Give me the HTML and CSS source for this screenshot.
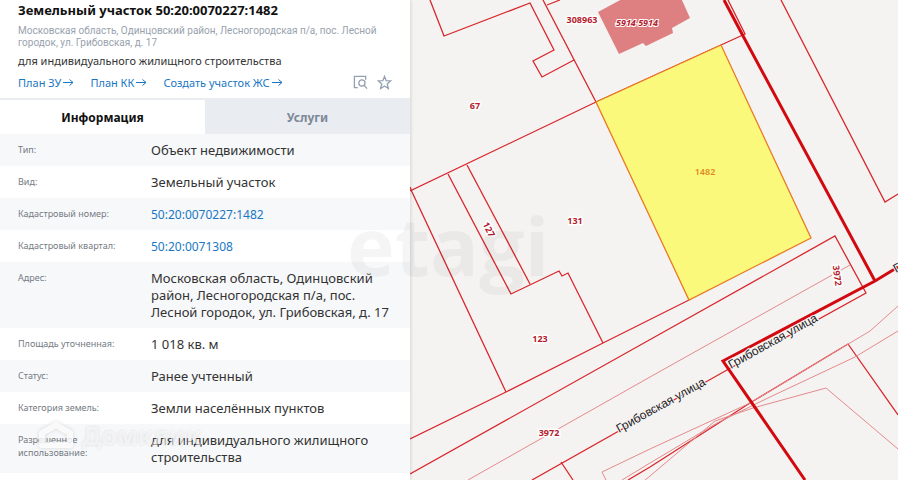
FILE: index.html
```html
<!DOCTYPE html>
<html lang="ru">
<head>
  <meta charset="UTF-8">
  <meta name="viewport" content="width=device-width, initial-scale=1">
  <title>Земельный участок 50:20:0070227:1482</title>
  <link rel="stylesheet" href="styles.css">
</head>
<body>

  <div class="page">
    <aside class="panel">
      <header class="panel-head">
        <h1>Земельный участок 50:20:0070227:1482</h1>
        <p class="address">Московская область, Одинцовский район, Лесногородская п/а, пос. Лесной городок, ул. Грибовская, д. 17</p>
        <p class="purpose">для индивидуального жилищного строительства</p>
        <div class="actions">
          <a href="#">План ЗУ<svg class="arrow" viewBox="0 0 11 9"><path d="M0 4.500h10M6.500 1.500l3.500 3-3.500 3"/></svg></a>
          <a href="#">План КК<svg class="arrow" viewBox="0 0 11 9"><path d="M0 4.500h10M6.500 1.500l3.500 3-3.500 3"/></svg></a>
          <a href="#">Создать участок ЖС<svg class="arrow" viewBox="0 0 11 9"><path d="M0 4.500h10M6.500 1.500l3.500 3-3.500 3"/></svg></a>
          <div class="tools">
            <button type="button" aria-label="Показать на карте">
              <svg viewBox="0 0 16 16"><path d="M5 13.500H1.500V1.500H13.500V5"/><circle cx="9.500" cy="8.500" r="3.300"/><path d="M12 11l3 3.500"/></svg>
            </button>
            <button type="button" aria-label="В избранное">
              <svg viewBox="0 0 16 16"><path d="M8 1.500l1.800 4.500 4.700.3-3.600 3.200 1.200 4.900L8 11.800 3.900 14.400l1.200-4.900-3.600-3.200 4.700-.3z"/></svg>
            </button>
          </div>
        </div>
      </header>

      <div class="tabs">
        <button type="button" class="tab active">Информация</button>
        <button type="button" class="tab">Услуги</button>
      </div>

      <table class="info">
        <tr><th scope="row">Тип:</th><td>Объект недвижимости</td></tr>
        <tr><th scope="row">Вид:</th><td>Земельный участок</td></tr>
        <tr><th scope="row">Кадастровый номер:</th><td><a href="#">50:20:0070227:1482</a></td></tr>
        <tr><th scope="row">Кадастровый квартал:</th><td><a href="#">50:20:0071308</a></td></tr>
        <tr><th scope="row">Адрес:</th><td>Московская область, Одинцовский район, Лесногородская п/а, пос. Лесной городок, ул. Грибовская, д. 17</td></tr>
        <tr><th scope="row">Площадь уточненная:</th><td>1 018 кв. м</td></tr>
        <tr><th scope="row">Статус:</th><td>Ранее учтенный</td></tr>
        <tr><th scope="row">Категория земель:</th><td>Земли населённых пунктов</td></tr>
        <tr><th scope="row">Разрешенное использование:</th><td>для индивидуального жилищного строительства</td></tr>
      </table>

      <div class="mark-domclick">
        <svg viewBox="0 0 36 28"><path d="M4 12L18 4l14 8v12H4z"/></svg>
        <span>Домклик</span>
      </div>
    </aside>

    <main class="map">
      <svg viewBox="410 0 488 480" preserveAspectRatio="xMinYMin slice">
        <!-- здание -->
        <path class="building" d="M598 12L624-2H681L690 18 672 28 673 33 646 46 643 43 619 54z"/>

        <!-- соседние участки -->
        <g class="line">
          <path d="M430 0L444 36 530 3 554 50 533 61 542 77 574 60"/>
          <path d="M543 0L596 102M547 5L560 0"/>
          <path d="M410 191L596 102 721 45 745 34 728 0"/>
          <path d="M410 187L412 192 506 392"/>
          <path d="M448 174L511 294 559 271 562 276 568 273 603 343"/>
          <path d="M467 165L530 284"/>
          <path d="M410 439L506 392 603 343 689 300"/>
          <path d="M410 474L660 334 835 236 866 293 727 370 532 480"/>
          <path d="M561 462L573 480"/>
          <path d="M781 0L885 202 898 194"/>
          <path d="M628 480L650 467 750 403 848 344 898 415"/>
        </g>
        <g class="line pale">
          <path d="M850 265L650 377 468 480"/>
          <path d="M898 306L870 331 750 403 650 449 602 472 606 480"/>
          <path d="M898 331L855 357 770 397 717 423 650 463 622 480"/>
          <path d="M898 449L826 388 753 408 715 421 650 476 645 480"/>
        </g>
        <path class="line thick" d="M724 0L742 34 875 281"/>
        <path class="line thick" d="M898 267L875 281 723 361 805 480"/>

        <!-- выбранный участок -->
        <path class="selected" d="M596 102L721 45 811 238 689 300z"/>

        <g class="label">
          <text x="475" y="109">67</text>
          <text x="582" y="23">308963</text>
          <text x="575" y="224">131</text>
          <text x="540" y="342">123</text>
          <text x="549" y="436">3972</text>
          <text transform="translate(486 231) rotate(63)">127</text>
          <text transform="translate(834 276) rotate(83)">3972</text>
          <text class="house" x="637" y="26">5914 5914</text>
        </g>
        <text class="selected-label" x="705" y="175">1482</text>

        <g class="street">
          <text transform="translate(619 433) rotate(-29)">Грибовская улица</text>
          <text transform="translate(731 369) rotate(-29)">Грибовская улица</text>
          <text transform="translate(896 273) rotate(-29)">Г</text>
        </g>
      </svg>
    </main>

    <div class="mark-etagi">etagi</div>
  </div>

</body>
</html>
```
FILE: styles.css
```css
* {
  box-sizing: border-box;
}

body {
  margin: 0;
  font-family: "Noto Sans", "Open Sans", sans-serif;
  font-size: 13px;
  line-height: 17px;
  color: #333;
  background: #f4f3f2;
}

a {
  color: #1a77c4;
  text-decoration: none;
}

button {
  font: inherit;
  border: none;
  padding: 0;
  background: none;
  cursor: pointer;
}

.page {
  position: relative;
  display: flex;
  height: 100vh;
  overflow: hidden;
}

/* левая панель */
.panel {
  position: relative;
  z-index: 1;
  flex: 0 0 410px;
  background: #fff;
  box-shadow: 0 0 4px rgba(0, 0, 0, 0.2);
}

.panel-head {
  padding: 2px 18px 7px;
  border-bottom: 2px solid #e9ecf1;
}

.panel-head h1 {
  margin: 0 0 6px;
  font-size: 13px;
  line-height: 17px;
  color: #111;
}

.address {
  margin: 0 0 3px;
  max-width: 360px;
  font-family: Roboto, sans-serif;
  font-size: 10px;
  line-height: 12px;
  color: #98a2ae;
}

.purpose {
  margin: 0 0 5px;
  font-size: 11px;
}

.actions {
  display: flex;
  align-items: center;
  gap: 16px;
  font-size: 11px;
}

.arrow {
  width: 11px;
  height: 9px;
  margin-left: 2px;
  fill: none;
  stroke: #1a77c4;
}

.tools {
  display: flex;
  gap: 9px;
  margin-left: auto;
}

.tools button,
.tools svg {
  display: block;
  width: 15px;
  height: 15px;
}

.tools svg {
  fill: none;
  stroke: #93a0b2;
  stroke-width: 1.4;
}

.tabs {
  display: flex;
}

.tab {
  flex: 1;
  height: 34px;
  font-size: 12px;
  font-weight: bold;
  color: #7d8796;
  background: #e9ecf1;
}

.tab.active {
  color: #111;
  background: #fff;
}

.info {
  width: 100%;
  border-collapse: collapse;
}

.info tr:nth-child(odd) {
  background: #f7f8fa;
}

.info th {
  width: 151px;
  padding: 9px 20px 0 18px;
  font-size: 9px;
  font-weight: normal;
  line-height: 13px;
  text-align: left;
  vertical-align: top;
  color: #757b83;
}

.info td {
  padding: 8px 20px 7px 0;
  vertical-align: top;
}

.info a {
  font-size: 12px;
}

/* карта */
.map {
  flex: 1;
  min-width: 0;
}

.map svg {
  display: block;
  width: 100%;
  height: 100%;
}

.line {
  fill: none;
  stroke: #d9262b;
  stroke-width: 1.3;
}

.pale {
  stroke: #e58a8c;
  stroke-width: 1;
}

.thick {
  stroke: #d20a10;
  stroke-width: 3;
}

.building {
  fill: #de7f81;
}

.selected {
  fill: #fbf97c;
  stroke: #ea7a22;
  stroke-width: 1.3;
}

.label text {
  font-size: 9px;
  font-weight: bold;
  text-anchor: middle;
  fill: #b5202c;
  stroke: #fff;
  stroke-width: 3px;
  paint-order: stroke;
}

.label .house {
  font-style: italic;
  stroke-width: 2px;
}

.selected-label {
  font-size: 9px;
  font-weight: 600;
  text-anchor: middle;
  fill: #dc8a1e;
}

.street text {
  font-family: "Liberation Sans", Arial, sans-serif;
  font-size: 12px;
  fill: #222;
  stroke: #f4f3f2;
  stroke-width: 2px;
  paint-order: stroke;
}

/* водяные знаки */
.mark-etagi {
  position: absolute;
  z-index: 2;
  left: 347px;
  top: 190px;
  font-family: "Open Sans", sans-serif;
  font-size: 81px;
  font-weight: bold;
  line-height: 110px;
  color: rgba(0, 0, 0, 0.04);
  pointer-events: none;
}

.mark-domclick {
  position: absolute;
  left: 38px;
  top: 415px;
  display: flex;
  align-items: center;
  gap: 8px;
  font-size: 25px;
  font-weight: bold;
  line-height: 40px;
  color: rgba(255, 255, 255, 0.6);
  text-shadow: 0 0 3px rgba(0, 0, 0, 0.12);
  pointer-events: none;
}

.mark-domclick svg {
  width: 36px;
  height: 28px;
  fill: none;
  stroke: rgba(255, 255, 255, 0.8);
  stroke-width: 6;
  stroke-linejoin: round;
  filter: drop-shadow(0 0 2px rgba(0, 0, 0, 0.16));
}
```
